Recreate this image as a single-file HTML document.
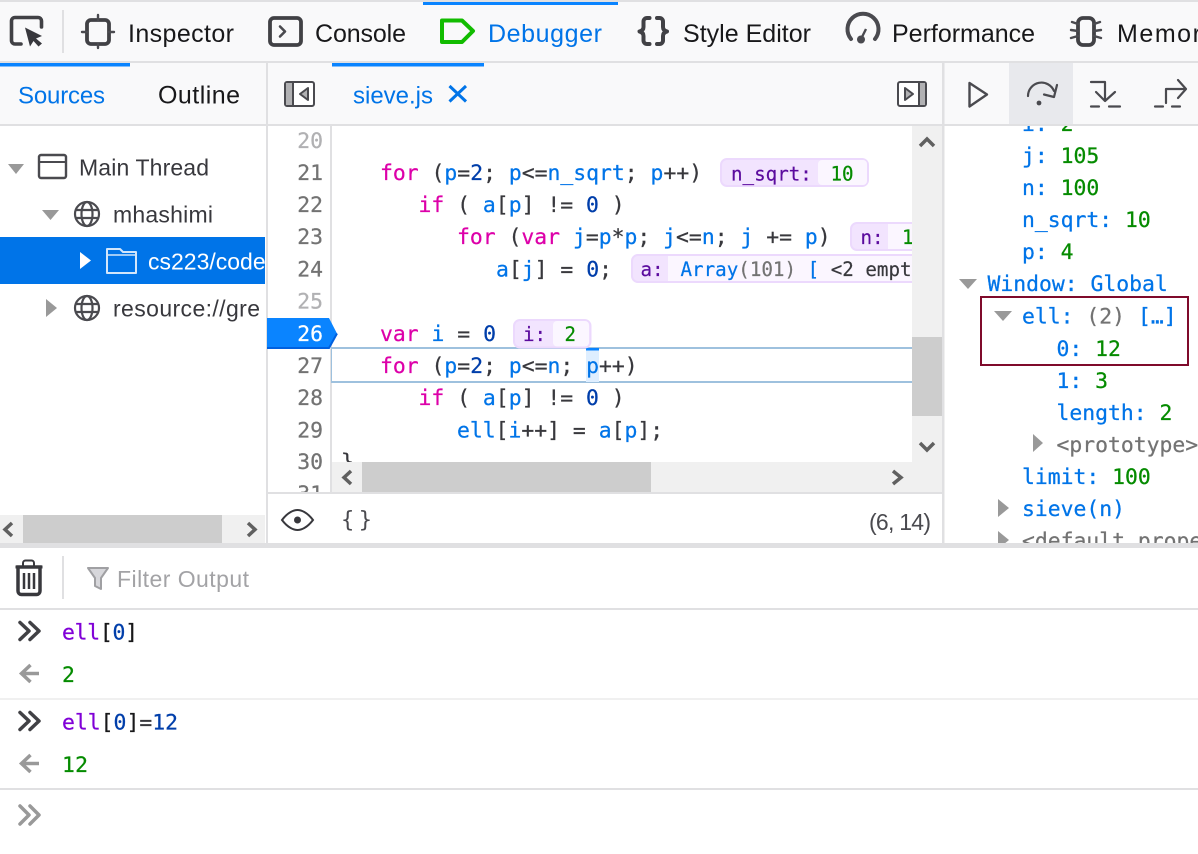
<!DOCTYPE html>
<html><head><meta charset="utf-8"><style>
html,body{margin:0;padding:0;background:#fff;overflow:hidden}
svg{display:block}
text{white-space:pre}
.u{font-family:"Liberation Sans",sans-serif;font-size:25px;fill:#18181a}
.t{font-family:"Liberation Sans",sans-serif;font-size:23px;fill:#38383d}
.m{font-family:"DejaVu Sans Mono",monospace;font-size:21.4px;fill:#38383d;stroke:#38383d;stroke-width:.25}
.s{font-family:"DejaVu Sans Mono",monospace;font-size:19.2px;fill:#38383d;stroke:#38383d;stroke-width:.2}
.b{fill:#0074e8;stroke:#0074e8}.k{fill:#dd00a9;stroke:#dd00a9}.n{fill:#003eaa;stroke:#003eaa}.g{fill:#058b00;stroke:#058b00}.p{fill:#8000d7;stroke:#8000d7}.y{fill:#737373;stroke:#737373}.v{fill:#5b0b9e;stroke:#5b0b9e}
.ln{fill:#737373;stroke:#737373;text-anchor:end}.lf{fill:#b1b1b3;stroke:#b1b1b3;text-anchor:end}
.d{fill:#18181a;stroke:#18181a}
.u.b,.t.b{stroke:none}
.i{fill:none;stroke:#4a4a4f;stroke-linejoin:round;stroke-linecap:round}
.i3{fill:none;stroke:#414145;stroke-linejoin:round;stroke-linecap:round}
.tri{fill:#999}
</style></head><body>
<svg width="1198" height="854" viewBox="0 0 1198 854" xmlns="http://www.w3.org/2000/svg">
<defs>
<clipPath id="cc"><rect x="331" y="126" width="581" height="336"/></clipPath>
<clipPath id="cg"><rect x="267" y="126" width="64" height="366"/></clipPath>
<clipPath id="cr"><rect x="945" y="126" width="253" height="417"/></clipPath>
<clipPath id="cl"><rect x="0" y="126" width="265" height="389"/></clipPath>
</defs>
<rect width="1198" height="854" fill="#fff"/>
<!-- top toolbar -->
<rect width="1198" height="125" fill="#f9f9fa"/>
<rect width="1198" height="2" fill="#e0e0e2"/>
<rect x="423" y="2" width="195" height="3" fill="#0a84ff"/>
<rect y="61" width="1198" height="2" fill="#e0e0e2"/>
<rect y="124" width="1198" height="2" fill="#e0e0e2"/>
<rect x="62" y="10" width="2" height="43" fill="#e0e0e2"/>
<!-- pick icon -->
<path class="i3" stroke-width="3.600" d="M21 44H15a3.500 3.500 0 0 1-3.500-3.500V21a3.500 3.500 0 0 1 3.500-3.500H38a3.500 3.500 0 0 1 3.500 3.500V27"/>
<path d="M25 27.500L42 36L36 38.500L42 43.500L38.500 46.500L33.500 41L30 46.500Z" fill="#38383d"/>
<!-- inspector icon -->
<rect x="87" y="20" width="22" height="24" rx="4" class="i3" stroke-width="3.800"/>
<path class="i" stroke-width="2.400" d="M98 15v5M98 44v4M82 32h5M109 32h5"/>
<text class="u" x="128" y="42" textLength="106">Inspector</text>
<!-- console icon -->
<rect x="270" y="18" width="31" height="27" rx="4" class="i3" stroke-width="3.800"/>
<path class="i" stroke-width="2.600" d="M280 26.500l5 5-5 5"/>
<text class="u" x="315" y="42" textLength="91">Console</text>
<!-- debugger icon -->
<path d="M442 20.500H462L473 31L462 42H442Z" fill="none" stroke="#12bc00" stroke-width="4" stroke-linejoin="round"/>
<text class="u b" x="488" y="42" textLength="114">Debugger</text>
<!-- style editor -->
<path class="i3" stroke-width="4" d="M649.500 18H647a3.500 3.500 0 0 0-3.500 3.500V27q0 3.500-4 4.500q4 1 4 4.500V40.500a3.500 3.500 0 0 0 3.500 3.500H649.500"/>
<path class="i3" stroke-width="4" d="M657 18H659.500a3.500 3.500 0 0 1 3.500 3.500V27q0 3.500 4 4.500q-4 1-4 4.500V40.500a3.500 3.500 0 0 1-3.500 3.500H657"/>
<text class="u" x="683" y="42" textLength="128">Style Editor</text>
<!-- performance -->
<path d="M851 39A15.500 15.500 0 1 1 875 39" fill="none" stroke="#4a4a4f" stroke-width="4" stroke-linecap="round"/>
<circle cx="861" cy="39.500" r="4" fill="#4a4a4f"/>
<path d="M861.500 38L866 29" stroke="#4a4a4f" stroke-width="2.400" fill="none"/>
<text class="u" x="892" y="42" textLength="143">Performance</text>
<!-- memory -->
<rect x="1078" y="18" width="16" height="27" rx="5" class="i3" stroke-width="3.800"/>
<path class="i" stroke-width="2.400" d="M1078 24l-6-2M1078 31l-7-1M1078 36l-7 2M1094 24l6-2M1094 31l7-1M1094 36l7 2"/>
<text class="u" x="1117" y="42" textLength="98">Memory</text>
<!-- second row -->
<rect x="0" y="63" width="130" height="3.500" fill="#0a84ff"/>
<rect x="332" y="63" width="152" height="3.500" fill="#0a84ff"/>
<text class="u b" style="font-size:24px" x="18" y="103.500" textLength="87">Sources</text>
<text class="u" x="158" y="103.500" textLength="82">Outline</text>
<rect x="266" y="63" width="2" height="480" fill="#e0e0e2"/>
<rect x="942" y="63" width="2.500" height="480" fill="#e0e0e2"/>
<!-- toggle left -->
<rect x="285" y="82" width="29" height="24" rx="2" fill="#fff" stroke="#4a4a4f" stroke-width="2"/>
<rect x="286" y="83" width="7" height="22" fill="#b1b1b3"/>
<path d="M293 82V106" stroke="#4a4a4f" stroke-width="2"/>
<path d="M308 88V100L300 94Z" fill="#b1b1b3" stroke="#4a4a4f" stroke-width="2" stroke-linejoin="round"/>
<text class="u b" style="font-size:24px" x="353" y="103.500" textLength="80">sieve.js</text>
<path d="M449.500 86L466 101.500M466 86L449.500 101.500" stroke="#0074e8" stroke-width="3" fill="none"/>
<!-- toggle right -->
<rect x="898" y="82" width="28" height="24" rx="2" fill="#fff" stroke="#4a4a4f" stroke-width="2"/>
<rect x="919" y="83" width="6" height="22" fill="#b1b1b3"/>
<path d="M919 82V106" stroke="#4a4a4f" stroke-width="2"/>
<path d="M905 88V100L913 94Z" fill="#b1b1b3" stroke="#4a4a4f" stroke-width="2" stroke-linejoin="round"/>
<!-- debug controls -->
<rect x="1009" y="63" width="64" height="61" fill="#e8e9ed"/>
<path class="i" stroke-width="2.400" d="M969.500 83L987 94.500L969.500 106.500Z"/>
<path class="i" stroke-width="2.200" d="M1028 96A13.500 13.500 0 0 1 1054 91M1057 85L1054 97L1044 94.500"/>
<circle cx="1039" cy="103" r="2.400" fill="#4a4a4f"/>
<path class="i" stroke-width="2.200" d="M1091 82H1105V99M1096 92L1105 101L1115 92"/>
<path class="i" stroke-width="2.200" d="M1091 106.500H1099M1109 106.500H1120"/>
<path class="i" stroke-width="2.200" d="M1166 103V89H1186M1178 80L1186 89L1178 98M1155 106.500H1163M1172 106.500H1180"/>
<!-- left tree -->
<path class="tri" d="M8 164H24L16 174Z"/>
<rect x="39" y="155" width="27" height="23" rx="2" fill="none" stroke="#4a4a4f" stroke-width="2.400"/>
<path d="M39 162H66" stroke="#4a4a4f" stroke-width="2"/>
<text class="t" x="79" y="175.500" textLength="130">Main Thread</text>
<path class="tri" d="M42 210H59L50.500 220Z"/>
<g fill="none" stroke="#4a4a4f" stroke-width="2.200"><circle cx="87" cy="214" r="12"/><ellipse cx="87" cy="214" rx="5.500" ry="12"/><path d="M75.500 210H98.500M75.500 218H98.500"/></g>
<text class="t" x="113" y="222.500" textLength="100">mhashimi</text>
<rect x="0" y="237" width="265" height="47" fill="#0074e8"/>
<path d="M80 252V269L91 260.500Z" fill="#fff"/>
<path d="M107 273V249H120L123 252H136V273Z" fill="none" stroke="#d3e6fb" stroke-width="2" stroke-linejoin="round"/>
<path d="M107 255H136" stroke="#d3e6fb" stroke-width="1.500"/>
<g clip-path="url(#cl)"><text class="t" style="fill:#fff" x="148" y="269.500">cs223/code</text></g>
<path class="tri" d="M46 299V317L57 308Z"/>
<g fill="none" stroke="#4a4a4f" stroke-width="2.200"><circle cx="87" cy="308" r="12"/><ellipse cx="87" cy="308" rx="5.500" ry="12"/><path d="M75.500 304H98.500M75.500 312H98.500"/></g>
<text class="t" x="113" y="316.500" textLength="147">resource://gre</text>
<!-- left scrollbar -->
<rect x="0" y="515" width="265" height="28" fill="#f0f0f0"/>
<rect x="23" y="515" width="199" height="28" fill="#cdcdcd"/>
<path d="M12 523L5 529.500L12 536M248 523L255 529.500L248 536" fill="none" stroke="#606060" stroke-width="3.500"/>
<!-- gutter -->
<rect x="330" y="126" width="2" height="366" fill="#e0e0e2"/>
<path d="M267 318H329L337 333.500L329 349H267Z" fill="#0a84ff"/>
<path d="M267 348H329L337 333.500" stroke="#0060df" stroke-width="2" fill="none"/>
<g clip-path="url(#cg)">
<text class="m lf" x="323" y="148">20</text>
<text class="m ln" x="323" y="180">21</text>
<text class="m ln" x="323" y="212">22</text>
<text class="m ln" x="323" y="244">23</text>
<text class="m ln" x="323" y="276.500">24</text>
<text class="m lf" x="323" y="308.500">25</text>
<text class="m ln" style="fill:#fff;stroke:#fff" x="323" y="341">26</text>
<text class="m ln" x="323" y="373">27</text>
<text class="m ln" x="323" y="405">28</text>
<text class="m ln" x="323" y="437.500">29</text>
<text class="m ln" x="323" y="469">30</text>
<text class="m ln" x="323" y="501">31</text>
</g>
<!-- code -->
<g clip-path="url(#cc)">
<rect x="331" y="348" width="590" height="34" fill="#fff" stroke="#9ec1de" stroke-width="2"/>
<rect x="586" y="349" width="13" height="33" fill="#deeeff"/>
<rect x="586" y="348" width="13" height="2.500" fill="#0a84ff"/>
<text class="m" x="380" y="180"><tspan class="k">for</tspan> (<tspan class="b">p</tspan>=<tspan class="n">2</tspan>; <tspan class="b">p</tspan>&lt;=<tspan class="b">n_sqrt</tspan>; <tspan class="b">p</tspan>++)</text>
<text class="m" x="418.500" y="212"><tspan class="k">if</tspan> ( <tspan class="b">a</tspan>[<tspan class="b">p</tspan>] != <tspan class="n">0</tspan> )</text>
<text class="m" x="457" y="244"><tspan class="k">for</tspan> (<tspan class="k">var</tspan> <tspan class="b">j</tspan>=<tspan class="b">p</tspan>*<tspan class="b">p</tspan>; <tspan class="b">j</tspan>&lt;=<tspan class="b">n</tspan>; <tspan class="b">j</tspan> += <tspan class="b">p</tspan>)</text>
<text class="m" x="496" y="276.500"><tspan class="b">a</tspan>[<tspan class="b">j</tspan>] = <tspan class="n">0</tspan>;</text>
<text class="m" x="380" y="341"><tspan class="k">var</tspan> <tspan class="b">i</tspan> = <tspan class="n">0</tspan></text>
<text class="m" x="380" y="373"><tspan class="k">for</tspan> (<tspan class="b">p</tspan>=<tspan class="n">2</tspan>; <tspan class="b">p</tspan>&lt;=<tspan class="b">n</tspan>; <tspan class="b">p</tspan>++)</text>
<text class="m" x="418.500" y="405"><tspan class="k">if</tspan> ( <tspan class="b">a</tspan>[<tspan class="b">p</tspan>] != <tspan class="n">0</tspan> )</text>
<text class="m" x="457" y="437.500"><tspan class="b">ell</tspan>[<tspan class="b">i</tspan>++] = <tspan class="b">a</tspan>[<tspan class="b">p</tspan>];</text>
<text class="m" x="341" y="469">}</text>
<!-- preview pills -->
<rect x="721" y="159" width="147" height="27" rx="6" fill="#f2e4fe" stroke="#ecd9fd" stroke-width="2"/>
<rect x="818" y="160" width="49" height="25" rx="4" fill="#fbf6ff"/>
<text class="s v" x="731" y="180.500">n_sqrt:</text><text class="s g" x="830.500" y="180.500">10</text>
<rect x="851" y="223" width="100" height="27" rx="6" fill="#f2e4fe" stroke="#ecd9fd" stroke-width="2"/>
<rect x="888" y="224" width="40" height="25" fill="#fbf6ff"/>
<text class="s v" x="860.500" y="244">n:</text><text class="s g" x="902" y="244">100</text>
<rect x="632" y="255" width="320" height="27" rx="6" fill="#f2e4fe" stroke="#ecd9fd" stroke-width="2"/>
<rect x="668" y="256" width="262" height="25" fill="#fbf6ff"/>
<text class="s v" x="640.500" y="276">a:</text>
<text class="s" x="680.500" y="276"><tspan class="b">Array</tspan><tspan class="y">(101)</tspan> <tspan class="b">[</tspan> &lt;2 empty</text>
<rect x="514" y="320" width="76.500" height="27.500" rx="6" fill="#f2e4fe" stroke="#ecd9fd" stroke-width="2"/>
<rect x="553" y="321" width="36" height="25.500" rx="4" fill="#fbf6ff"/>
<text class="s v" x="523" y="341">i:</text><text class="s g" x="564.500" y="341">2</text>
</g>
<!-- scrollbars -->
<rect x="912" y="126" width="30" height="366" fill="#f0f0f0"/>
<rect x="912" y="337" width="30" height="79" fill="#cdcdcd"/>
<path d="M920 146L927 139L934 146M920 443L927 450L934 443" fill="none" stroke="#606060" stroke-width="3.500"/>
<rect x="332" y="462" width="610" height="30" fill="#f0f0f0"/>
<rect x="362" y="462" width="289" height="30" fill="#cdcdcd"/>
<path d="M351 471L344 477.500L351 484M893 471L901 477.500L893 484" fill="none" stroke="#606060" stroke-width="3.500"/>
<rect x="268" y="492" width="674" height="2" fill="#e0e0e2"/>
<!-- status row -->
<path d="M282 520C288 512 294 510 297.500 510C301 510 307 512 313 520C307 528 301 530 297.500 530C294 530 288 528 282 520Z" fill="none" stroke="#38383d" stroke-width="2"/>
<circle cx="297.500" cy="520" r="3.500" fill="#38383d"/>
<text x="341" y="527" font-family="DejaVu Sans Mono,monospace" font-size="22" fill="#4a4a4f" textLength="31">{ }</text>
<text class="t" style="fill:#4a4a4f" x="869" y="530" textLength="62">(6, 14)</text>
<!-- right panel -->
<g clip-path="url(#cr)">
<text class="m" x="1022" y="131"><tspan class="b">i:</tspan> <tspan class="g">2</tspan></text>
<text class="m" x="1022" y="163"><tspan class="b">j:</tspan> <tspan class="g">105</tspan></text>
<text class="m" x="1022" y="195"><tspan class="b">n:</tspan> <tspan class="g">100</tspan></text>
<text class="m" x="1022" y="227"><tspan class="b">n_sqrt:</tspan> <tspan class="g">10</tspan></text>
<text class="m" x="1022" y="259"><tspan class="b">p:</tspan> <tspan class="g">4</tspan></text>
<path class="tri" d="M959 279H977L968 289Z"/>
<text class="m b" x="987.500" y="291">Window: Global</text>
<path class="tri" d="M994 311H1012L1003 321Z"/>
<text class="m" x="1022" y="323.500"><tspan class="b">ell:</tspan> <tspan class="y">(2)</tspan> <tspan class="b">[…]</tspan></text>
<text class="m" x="1056.500" y="356"><tspan class="b">0:</tspan> <tspan class="g">12</tspan></text>
<text class="m" x="1056.500" y="388"><tspan class="b">1:</tspan> <tspan class="g">3</tspan></text>
<text class="m" x="1056.500" y="420"><tspan class="b">length:</tspan> <tspan class="g">2</tspan></text>
<path class="tri" d="M1033 434V452L1043 443Z"/>
<text class="m y" x="1056.500" y="452">&lt;prototype&gt;</text>
<text class="m" x="1022" y="484"><tspan class="b">limit:</tspan> <tspan class="g">100</tspan></text>
<path class="tri" d="M998 499V517L1009 508Z"/>
<text class="m b" x="1022" y="516">sieve(n)</text>
<path class="tri" d="M998 531V549L1009 540Z"/>
<text class="m y" x="1022" y="548">&lt;default properties&gt;</text>
</g>
<rect x="981" y="297" width="207" height="68" fill="none" stroke="#7f0a2b" stroke-width="2"/>
<!-- splitter + console toolbar -->
<rect y="543" width="1198" height="5" fill="#e0e0e2"/>
<rect x="62" y="556" width="2" height="43" fill="#e0e0e2"/>
<path d="M15.500 567H42.500" stroke="#38383d" stroke-width="3"/>
<path d="M23 566V563a2.500 2.500 0 0 1 2.500-2.500H31.500a2.500 2.500 0 0 1 2.500 2.500V566" fill="none" stroke="#38383d" stroke-width="2"/>
<path d="M18 567H40V591a3.500 3.500 0 0 1-3.500 3.500H21.500a3.500 3.500 0 0 1-3.500-3.500Z" fill="none" stroke="#38383d" stroke-width="3.500"/>
<path d="M24 573V589M29 573V589M34 573V589" stroke="#38383d" stroke-width="2.500"/>
<path d="M88 568H108L101 578V589L95 586V578Z" fill="#d7d7db" stroke="#a0a0a3" stroke-width="2" stroke-linejoin="round"/>
<text class="t" style="fill:#a3a3a6" x="117" y="587" textLength="132">Filter Output</text>
<rect y="608" width="1198" height="2" fill="#e0e0e2"/>
<!-- console -->
<path class="i3" stroke-width="3.500" d="M20 622.500L29 631L20 639.500M30 622.500L39 631L30 639.500"/>
<text class="m" x="62" y="639.500" textLength="76"><tspan class="p">ell</tspan><tspan class="d">[</tspan><tspan class="n">0</tspan><tspan class="d">]</tspan></text>
<path d="M39 673.500H23M30.500 665L21.500 673.500L30.500 682" fill="none" stroke="#999" stroke-width="3.500"/>
<text class="m g" x="62" y="682">2</text>
<rect y="698" width="1198" height="2" fill="#f0f0f0"/>
<path class="i3" stroke-width="3.500" d="M20 712.500L29 721L20 729.500M30 712.500L39 721L30 729.500"/>
<text class="m" x="62" y="729.500" textLength="116"><tspan class="p">ell</tspan><tspan class="d">[</tspan><tspan class="n">0</tspan><tspan class="d">]</tspan>=<tspan class="n">12</tspan></text>
<path d="M39 763.500H23M30.500 755L21.500 763.500L30.500 772" fill="none" stroke="#999" stroke-width="3.500"/>
<text class="m g" x="62" y="772" textLength="26">12</text>
<rect y="788" width="1198" height="2" fill="#e0e0e2"/>
<path class="i3" style="stroke:#999" stroke-width="3.500" d="M20 806L29 815L20 824M30 806L39 815L30 824"/>
</svg>
</body></html>
